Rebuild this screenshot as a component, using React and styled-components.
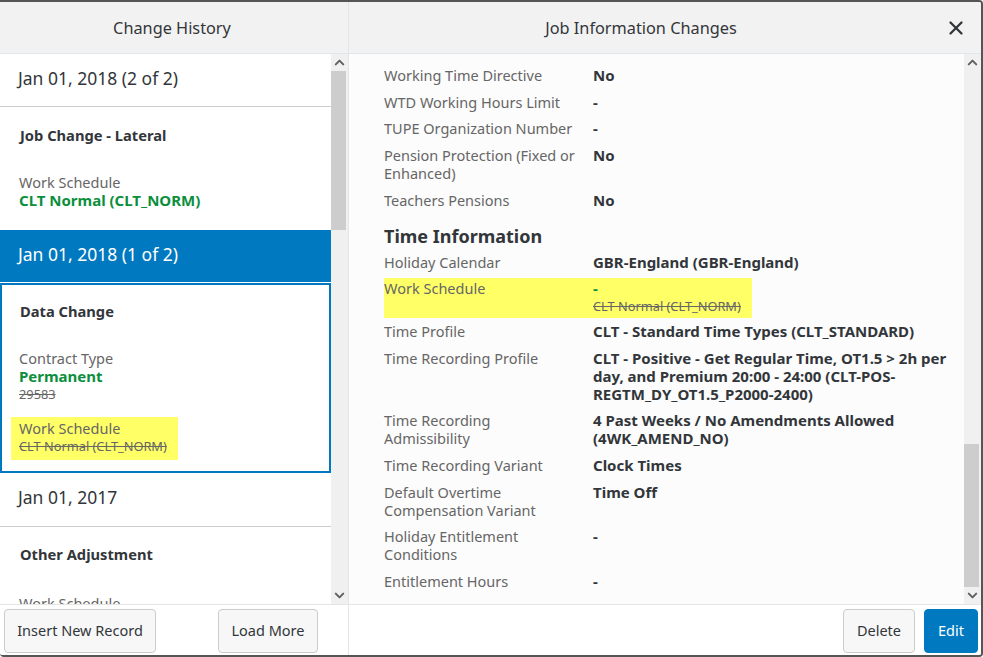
import React from 'react'
import styled, { createGlobalStyle } from 'styled-components'
import { ChevronUp, ChevronDown, X } from 'lucide-react'

const GlobalStyle = createGlobalStyle`
  html, body {
    margin: 0;
    padding: 0;
    background: #fff;
  }
  * {
    box-sizing: border-box;
  }
`

const Dialog = styled.div`
  width: 983px;
  height: 657px;
  display: grid;
  grid-template-columns: 349px 1fr;
  overflow: hidden;
  border-top: 2px solid #555;
  border-right: 2px solid #555;
  border-bottom: 2px solid #555;
  border-radius: 0 4px 4px 4px;
  font-family: "Noto Sans", sans-serif;
  font-size: 14.5px;
  color: #32363a;
`

const Pane = styled.section`
  display: flex;
  flex-direction: column;
  min-width: 0;
  min-height: 0;
  border-right: ${p => (p.$divider ? '1px solid #e5e5e5' : 'none')};
`

const Header = styled.header`
  flex: 0 0 52px;
  position: relative;
  display: flex;
  align-items: center;
  justify-content: center;
  padding-right: ${p => p.$inset || 4}px;
  background: #f2f2f2;
  border-bottom: 1px solid #dfe6ec;
  font-size: 16.3px;
`

const Close = styled.button`
  position: absolute;
  right: 14px;
  top: 15px;
  padding: 0;
  border: 0;
  background: none;
  display: flex;
  color: #32363a;
`

const Body = styled.div`
  flex: 1;
  min-height: 0;
  display: flex;
  background: #fff;
`

const Scrolled = styled.div`
  flex: 1;
  min-width: 0;
  overflow: hidden;
`

const Track = styled.div`
  flex: 0 0 17px;
  display: flex;
  flex-direction: column;
  align-items: center;
  background: #f0f0f0;
`

const Arrow = styled.div`
  flex: 0 0 17px;
  display: flex;
  align-items: center;
  justify-content: center;
  color: #606060;
`

const TrackSpace = styled.div`
  flex: 1;
  width: 100%;
  display: flex;
  flex-direction: column;
  padding-top: ${p => p.$before}px;
`

const Thumb = styled.div`
  width: 15px;
  height: ${p => p.$size}px;
  background: #cdcdcd;
`

const DateRow = styled.div`
  height: ${p => p.$height || 53}px;
  display: flex;
  align-items: center;
  padding: 0 0 5px 18px;
  font-size: 17.5px;
  background: ${p => (p.$active ? '#0079c0' : '#fff')};
  color: ${p => (p.$active ? '#fff' : '#32363a')};
  border-bottom: 1px solid ${p => (p.$active ? '#fff' : '#ccc')};
`

const EventCard = styled.div`
  height: ${p => p.$height}px;
  padding: ${p => (p.$selected ? '17px 18px 0 18px' : `${p.$top ?? 19}px 20px 0 20px`)};
  border: ${p => (p.$selected ? '2px solid #0079c0' : 'none')};
  background: #fff;
`

const EventTitle = styled.div`
  font-weight: 700;
  font-size: 14.7px;
  line-height: 19px;
  margin-bottom: ${p => p.$gap ?? 28}px;
`

const Change = styled.div`
  width: fit-content;
  margin: ${p => (p.$marked ? '14px 0 0 -9px' : '0 0 0 -1px')};
  padding: ${p => (p.$marked ? '2px 11px 5px 8px' : '0')};
  background: ${p => (p.$marked ? '#ffff66' : 'transparent')};
`

const FieldName = styled.div`
  font-size: 14.5px;
  line-height: 18px;
  color: #666;
`

const NewValue = styled.div`
  font-size: 15px;
  line-height: 18px;
  font-weight: 700;
  color: #0b8f3c;
`

const OldValue = styled.div`
  font-size: 12.8px;
  line-height: 18px;
  color: #666;
  text-decoration: line-through;
`

const Footer = styled.footer`
  flex: 0 0 51px;
  display: flex;
  align-items: center;
  justify-content: ${p => (p.$end ? 'flex-end' : 'space-between')};
  gap: 9px;
  padding: ${p => (p.$end ? '1px 3px 0 0' : '1px 30px 0 4px')};
  background: #fff;
  border-top: 1px solid #e5e5e5;
`

const Button = styled.button`
  height: 44px;
  width: ${p => p.$width}px;
  padding: 0 0 2px;
  font-family: inherit;
  font-size: 14.5px;
  border-radius: 4px;
  border: 1px solid ${p => (p.$primary ? '#0079c0' : '#ccc')};
  background: ${p => (p.$primary ? '#0079c0' : '#f7f7f7')};
  color: ${p => (p.$primary ? '#fff' : '#32363a')};
`

const Details = styled.div`
  padding: 12px 0 0 35px;
  background: #fcfcfc;
  height: 100%;
`

const SectionTitle = styled.h2`
  margin: 13px 0 3px;
  font-size: 18px;
  line-height: 28px;
  font-weight: 700;
`

const Row = styled.div`
  display: grid;
  grid-template-columns: 209px 1fr;
  align-items: baseline;
  padding: ${p => (p.$marked ? '1px 0 3px' : '0')};
  margin-bottom: ${p => p.$gap ?? 8.7}px;
  width: ${p => (p.$marked ? '368px' : 'auto')};
  background: ${p => (p.$marked ? '#ffff66' : 'transparent')};
`

const RowLabel = styled.div`
  line-height: 18px;
  color: #666;
  padding-right: 17px;
`

const RowValue = styled.div`
  line-height: 18px;
  font-size: 15px;
  font-weight: 700;
  padding-right: 4px;
`

const Dash = styled.div`
  line-height: 17px;
  font-size: 15px;
  font-weight: 700;
  color: #0b8f3c;
`

const ScrollBar = ({ before, size }) => (
  <Track>
    <Arrow><ChevronUp size={15} strokeWidth={3.2} /></Arrow>
    <TrackSpace $before={before}><Thumb $size={size} /></TrackSpace>
    <Arrow><ChevronDown size={15} strokeWidth={3.2} /></Arrow>
  </Track>
)

const rowsTop = [
  ['Working Time Directive', 'No'],
  ['WTD Working Hours Limit', '-'],
  ['TUPE Organization Number', '-'],
  ['Pension Protection (Fixed or Enhanced)', 'No'],
  ['Teachers Pensions', 'No'],
]

const rowsBottom = [
  ['Time Profile', 'CLT - Standard Time Types (CLT_STANDARD)'],
  ['Time Recording Profile', 'CLT - Positive - Get Regular Time, OT1.5 > 2h per day, and Premium 20:00 - 24:00 (CLT-POS-REGTM_DY_OT1.5_P2000-2400)'],
  ['Time Recording Admissibility', '4 Past Weeks / No Amendments Allowed (4WK_AMEND_NO)'],
  ['Time Recording Variant', 'Clock Times'],
  ['Default Overtime Compensation Variant', 'Time Off'],
  ['Holiday Entitlement Conditions', '-'],
  ['Entitlement Hours', '-'],
]

const DetailRow = ({ label, value, gap }) => (
  <Row $gap={gap}>
    <RowLabel>{label}</RowLabel>
    <RowValue>{value}</RowValue>
  </Row>
)

export default function App() {
  return (
    <>
      <GlobalStyle />
      <Dialog>
        <Pane $divider>
          <Header>Change History</Header>
          <Body>
            <Scrolled>
              <DateRow>Jan 01, 2018 (2 of 2)</DateRow>
              <EventCard $height={123}>
                <EventTitle>Job Change - Lateral</EventTitle>
                <Change>
                  <FieldName>Work Schedule</FieldName>
                  <NewValue>CLT Normal (CLT_NORM)</NewValue>
                </Change>
              </EventCard>
              <DateRow $active>Jan 01, 2018 (1 of 2)</DateRow>
              <EventCard $selected $height={190}>
                <EventTitle>Data Change</EventTitle>
                <Change>
                  <FieldName>Contract Type</FieldName>
                  <NewValue>Permanent</NewValue>
                  <OldValue>29583</OldValue>
                </Change>
                <Change $marked>
                  <FieldName>Work Schedule</FieldName>
                  <OldValue>CLT Normal (CLT_NORM)</OldValue>
                </Change>
              </EventCard>
              <DateRow $height={54}>Jan 01, 2017</DateRow>
              <EventCard $height={100} $top={18}>
                <EventTitle $gap={30}>Other Adjustment</EventTitle>
                <Change>
                  <FieldName>Work Schedule</FieldName>
                </Change>
              </EventCard>
            </Scrolled>
            <ScrollBar before={0} size={159} />
          </Body>
          <Footer>
            <Button $width={152}>Insert New Record</Button>
            <Button $width={100}>Load More</Button>
          </Footer>
        </Pane>
        <Pane>
          <Header $inset={48}>
            Job Information Changes
            <Close aria-label="Close"><X size={22} strokeWidth={2.5} /></Close>
          </Header>
          <Body>
            <Scrolled>
              <Details>
                {rowsTop.map(([label, value]) => (
                  <DetailRow key={label} label={label} value={value} />
                ))}
                <SectionTitle>Time Information</SectionTitle>
                <DetailRow label="Holiday Calendar" value="GBR-England (GBR-England)" gap={7} />
                <Row $marked $gap={4.3}>
                  <RowLabel>Work Schedule</RowLabel>
                  <div>
                    <Dash>-</Dash>
                    <OldValue>CLT Normal (CLT_NORM)</OldValue>
                  </div>
                </Row>
                {rowsBottom.map(([label, value]) => (
                  <DetailRow key={label} label={label} value={value} />
                ))}
              </Details>
            </Scrolled>
            <ScrollBar before={373} size={143} />
          </Body>
          <Footer $end>
            <Button $width={72}>Delete</Button>
            <Button $primary $width={54}>Edit</Button>
          </Footer>
        </Pane>
      </Dialog>
    </>
  )
}
